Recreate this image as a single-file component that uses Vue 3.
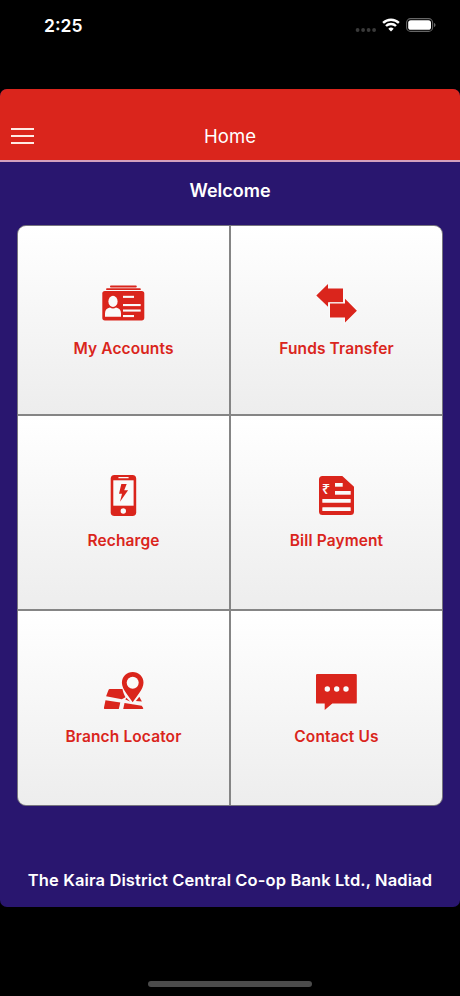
<template>
  <div class="phone">
    <header class="status-bar">
      <span class="time">2:25</span>
      <div class="indicators">
        <svg class="signal" width="22" height="6" viewBox="0 0 22 6">
          <circle v-for="n in 4" :key="n" :cx="n * 5.5 - 2.9" cy="3" r="1.9" fill="#3a3a3a" />
        </svg>
        <svg class="wifi" width="18" height="14" viewBox="0 0 18 14" fill="none" stroke="#fff">
          <path d="M1.1 4.9a11.4 11.4 0 0 1 15.8 0" stroke-width="2.4" />
          <path d="M4 8a7.1 7.1 0 0 1 10 0" stroke-width="2.4" />
          <path d="M9 13.4 6.3 10.7a3.9 3.9 0 0 1 5.4 0Z" fill="#fff" stroke="none" />
        </svg>
        <svg class="battery" width="30" height="14" viewBox="0 0 30 14">
          <rect x="0.6" y="0.6" width="26" height="12.8" rx="4" fill="none" stroke="#666" stroke-width="1.1" />
          <rect x="2.2" y="2.2" width="22.8" height="9.6" rx="2.6" fill="#fff" />
          <path d="M28 5v4c.9-.3 1.5-1.1 1.5-2S28.9 5.3 28 5Z" fill="#666" />
        </svg>
      </div>
    </header>

    <main class="app">
      <nav class="nav-bar">
        <button class="menu-btn" aria-label="Menu">
          <span></span>
          <span></span>
          <span></span>
        </button>
        <h1>Home</h1>
      </nav>

      <h2 class="welcome">Welcome</h2>

      <section class="tiles">
        <button v-for="tile in tiles" :key="tile.id" class="tile">
          <svg class="tile-icon" width="44" height="44" viewBox="0.5 0 44 44">
            <template v-if="tile.id === 'accounts'">
              <rect x="8.5" y="4.6" width="26.8" height="1.9" rx="0.9" />
              <rect x="4.6" y="7.2" width="34.7" height="1.9" rx="0.9" />
              <rect x="0.8" y="10" width="42" height="29.4" rx="2.6" />
              <g class="cut">
                <ellipse cx="11.5" cy="20.4" rx="4.6" ry="5.6" />
                <path d="M3.5 35.7v-3.5c0-3.4 2-5.2 5-5.8 1.8 1.5 4.2 1.5 6 0 3 .6 5 2.4 5 5.8v3.5Z" />
                <rect x="21.5" y="14.8" width="11" height="2.1" />
                <rect x="21.5" y="23" width="17.7" height="2.1" />
                <rect x="21.5" y="28.5" width="17.7" height="2.1" />
                <rect x="21.5" y="34" width="11" height="2.1" />
              </g>
            </template>

            <template v-else-if="tile.id === 'transfer'">
              <path d="M1.8 14.6 13.5 3v4.6h15v13.7h-15v4.5Z" />
              <path class="outlined" d="M15.5 22.5h15V17.8L42.4 29.7 30.5 41.5v-5h-15Z" />
            </template>

            <template v-else-if="tile.id === 'recharge'">
              <rect x="9.2" y="2" width="25.5" height="41" rx="3.8" />
              <g class="cut">
                <rect x="11.8" y="7.3" width="20.3" height="25.4" />
                <rect x="16.8" y="4.1" width="10.4" height="1.2" rx="0.6" />
                <circle cx="21.8" cy="38" r="2.7" />
              </g>
              <path d="M19.8 11h5.4l-2.5 6.2 3.9.1-8.1 11.4 2-8h-3Z" />
            </template>

            <template v-else-if="tile.id === 'bill'">
              <path d="M8 3h19.8l11.7 10.7V38.5a3.5 3.5 0 0 1-3.5 3.5H8a3.5 3.5 0 0 1-3.5-3.5V6.5A3.5 3.5 0 0 1 8 3Z" />
              <g class="cut">
                <text class="rupee" x="7.2" y="20.6">₹</text>
                <rect x="20.5" y="10" width="7.7" height="3.7" />
                <rect x="20.5" y="18" width="15.7" height="3.7" />
                <rect x="7.8" y="26" width="28.4" height="3.7" rx="0.5" />
                <rect x="7.8" y="34.3" width="28.4" height="3.7" rx="0.5" />
              </g>
            </template>

            <template v-else-if="tile.id === 'branch'">
              <path d="M8.4 20h12.6c.5 2.9 1.5 5.6 3 8.3l-3.7 2L4.6 27.3 6.9 21.2Q7.3 20 8.4 20Z" />
              <path d="M4 31.2 18.8 33.6 17.3 40H3.4Q2 40 2.5 38.4Z" />
              <path d="M23 33.9 40.2 36.7 41.7 39Q42 40 41 40H21.7Z" />
              <path d="M23.9 30.6 24.8 28.7 28.6 32.6Z" />
              <path
                class="outlined"
                d="M31.2 33.2C28 27.9 20.4 20.6 20.4 13.7a10.8 10.8 0 0 1 21.6 0C42 20.6 34.4 27.9 31.2 33.2Z"
              />
              <path d="M37.8 27.8 40.4 32.4 34.4 31.9Z" />
              <circle class="cut" cx="31.2" cy="13.7" r="6" />
            </template>

            <template v-else-if="tile.id === 'contact'">
              <path d="M2.7 5h38.4q1.2 0 1.2 1.2v27.2q0 1.200-1.200 1.200H17.8L10.2 41v-6.4H2.7q-1.200 0-1.200-1.200V6.2Q1.5 5 2.7 5Z" />
              <g class="cut">
                <circle cx="12.8" cy="20" r="2.7" />
                <circle cx="22.2" cy="20" r="2.7" />
                <circle cx="31.5" cy="20" r="2.7" />
              </g>
            </template>
          </svg>
          <span class="tile-label">{{ tile.label }}</span>
        </button>
      </section>

      <footer class="bank-name">The Kaira District Central Co-op Bank Ltd., Nadiad</footer>
    </main>

    <div class="home-indicator"></div>
  </div>
</template>

<script setup>
const tiles = [
  { id: 'accounts', label: 'My Accounts' },
  { id: 'transfer', label: 'Funds Transfer' },
  { id: 'recharge', label: 'Recharge' },
  { id: 'bill', label: 'Bill Payment' },
  { id: 'branch', label: 'Branch Locator' },
  { id: 'contact', label: 'Contact Us' },
]
</script>

<style>
body {
  margin: 0;
  background: #000;
}
</style>

<style scoped>
.phone {
  display: flex;
  flex-direction: column;
  width: 460px;
  height: 996px;
  background: #000;
  color: #fff;
  font-family: Inter, 'Liberation Sans', sans-serif;
  overflow: hidden;
}

.status-bar {
  display: flex;
  justify-content: space-between;
  align-items: flex-start;
  box-sizing: border-box;
  height: 89px;
  padding: 14px 24px 0 44px;
}

.time {
  font-size: 17.5px;
  font-weight: 600;
  line-height: 24px;
}

.indicators {
  display: flex;
  align-items: flex-start;
  padding-top: 4px;
}

.signal {
  margin-top: 9px;
  margin-right: 5px;
}

.wifi {
  margin-right: 6px;
}

.app {
  display: flex;
  flex-direction: column;
  height: 818px;
  border-radius: 7px;
  background: #29166f;
  overflow: hidden;
}

.nav-bar {
  display: grid;
  grid-template-columns: 60px 1fr 60px;
  align-items: center;
  box-sizing: border-box;
  height: 73px;
  padding-top: 22px;
  border-bottom: 2px solid #d3a0bf;
  background: #da251c;
}

.menu-btn {
  display: flex;
  flex-direction: column;
  gap: 5px;
  width: 23px;
  margin-left: 11px;
  padding: 0;
  border: 0;
  background: none;
}

.menu-btn span {
  height: 2px;
  background: #ffeae4;
}

.nav-bar h1 {
  margin: 0;
  font-size: 18.5px;
  font-weight: 400;
  line-height: 24px;
  text-align: center;
}

.welcome {
  margin: 17px 0 22px;
  font-size: 18px;
  font-weight: 600;
  line-height: 24px;
  text-align: center;
}

.tiles {
  display: grid;
  grid-template-columns: 1fr 1fr;
  grid-template-rows: 188px 193px 194px;
  gap: 2px;
  margin: 0 17px;
  border: 1px solid #77757f;
  border-radius: 9px;
  background: #858585;
  overflow: hidden;
}

.tile {
  display: flex;
  flex-direction: column;
  align-items: center;
  justify-content: center;
  gap: 13px;
  padding: 0 0 0.4px;
  border: 0;
  background: linear-gradient(#fff, #ededed);
  color: #da251c;
  font-family: inherit;
}

.tile-icon {
  fill: #da251c;
}

.cut {
  fill: #fafafa;
}

.outlined {
  stroke: #fafafa;
  stroke-width: 2px;
  paint-order: stroke;
}

.rupee {
  font-family: 'Noto Sans', 'DejaVu Sans', sans-serif;
  font-size: 15px;
  font-weight: 500;
}

.tile-label {
  font-size: 15.5px;
  font-weight: 600;
  line-height: 21px;
  letter-spacing: 0.12px;
}

.bank-name {
  margin-top: 62px;
  font-size: 16.5px;
  font-weight: 600;
  line-height: 24px;
  letter-spacing: 0.12px;
  text-align: center;
  white-space: nowrap;
}

.home-indicator {
  width: 164px;
  height: 6px;
  margin: 74px auto 0;
  border-radius: 3px;
  background: #4b4b4b;
}
</style>
